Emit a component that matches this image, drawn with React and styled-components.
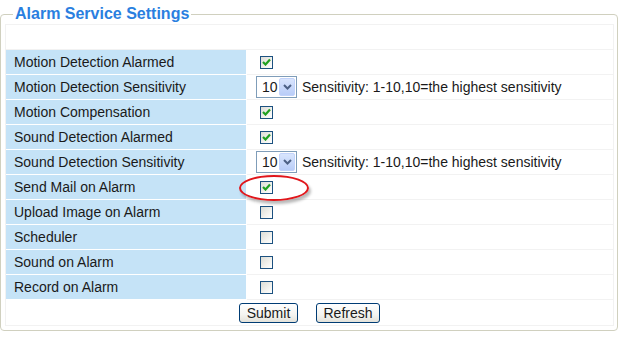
import * as React from 'react';
import styled, { createGlobalStyle } from 'styled-components';

const GlobalStyle = createGlobalStyle`
    html, body {
        margin: 0;
        padding: 0;
        background: #ffffff;
    }
    body {
        font-family: "Liberation Sans", Arial, sans-serif;
        font-size: 14px;
        color: #1a1a1a;
    }
`;

const Frame = styled.fieldset`
    box-sizing: border-box;
    width: 618px;
    margin: 4px 0 0 0;
    padding: 0 3px 4px 4px;
    border: 1px solid #d0d0bf;
    border-radius: 4px;
`;

const Title = styled.legend`
    margin-left: 8px;
    padding: 0 2px;
    font-weight: bold;
    font-size: 16px;
    line-height: 20px;
    color: #2a7fe0;
`;

const Panel = styled.div`
    display: grid;
    grid-template-columns: 240px 1fr;
    row-gap: 1px;
    column-gap: 1px;
    border: 1px solid #f2f2f2;
    background: #ffffff;
`;

const SpacerRow = styled.div`
    grid-column: 1 / -1;
    height: 24px;
    box-shadow: 0 1px 0 #f2f2f2;
`;

const Label = styled.div`
    display: flex;
    align-items: center;
    height: 24px;
    padding-left: 8px;
    background: #c5e3f7;
    white-space: nowrap;
`;

const Value = styled.div`
    position: relative;
    display: flex;
    align-items: center;
    height: 24px;
    padding-left: ${(p) => (p.$select ? 9 : 13)}px;
    box-shadow: 0 1px 0 #f2f2f2;
    white-space: nowrap;
`;

const Box = styled.span`
    box-sizing: border-box;
    display: inline-flex;
    align-items: center;
    justify-content: center;
    width: 13px;
    height: 13px;
    border: 1px solid #1c5180;
    background: linear-gradient(135deg, #dcdcd5 0%, #f6f6f3 70%, #ffffff 100%);
`;

const Select = styled.span`
    box-sizing: border-box;
    display: inline-flex;
    align-items: stretch;
    width: 41px;
    height: 22px;
    border: 1px solid #7f9db9;
    background: #ffffff;
    padding: 1px;
`;

const SelectText = styled.span`
    flex: 1;
    display: flex;
    align-items: center;
    padding-left: 4px;
    font-size: 14px;
`;

const SelectButton = styled.span`
    width: 16px;
    display: flex;
    align-items: center;
    justify-content: center;
    border-radius: 2px;
    background: linear-gradient(180deg, #d9e5fd 0%, #b9cdf8 100%);
    border: 1px solid #c2d3fb;
    box-sizing: border-box;
`;

const Hint = styled.span`
    margin-left: 5px;
`;

const ButtonRow = styled.div`
    grid-column: 1 / -1;
    display: flex;
    justify-content: center;
    align-items: center;
    gap: 18px;
    height: 25px;
`;

const Button = styled.button`
    box-sizing: border-box;
    height: 20px;
    width: ${(p) => p.$w}px;
    margin-top: 1px;
    padding: 0;
    font-family: "Liberation Sans", Arial, sans-serif;
    font-size: 14px;
    color: #1a1a1a;
    border: 1px solid #003c74;
    border-radius: 3px;
    background: linear-gradient(180deg, #ffffff 0%, #f4f4f0 60%, #e3e2da 100%);
`;

const Mark = styled.span`
    position: absolute;
    left: -8px;
    top: 0;
    width: 70px;
    height: 26px;
    box-sizing: border-box;
    border: 2px solid #e0161b;
    border-radius: 50%;
    box-shadow: 2px 3px 3px rgba(0, 0, 0, 0.28);
    pointer-events: none;
`;

function Check({ on }) {
    return (
        <Box>
            {on && (
                <svg width="9" height="8" viewBox="0 0 9 8">
                    <path d="M1 4 L3.5 6.5 L8 1.5" fill="none" stroke="#21a121" strokeWidth="2.2" />
                </svg>
            )}
        </Box>
    );
}

function SensitivitySelect() {
    return (
        <>
            <Select>
                <SelectText>10</SelectText>
                <SelectButton>
                    <svg width="9" height="6" viewBox="0 0 9 6">
                        <path d="M1 1 L4.5 4.5 L8 1" fill="none" stroke="#4d6185" strokeWidth="2" />
                    </svg>
                </SelectButton>
            </Select>
            <Hint>Sensitivity: 1-10,10=the highest sensitivity</Hint>
        </>
    );
}

const rows = [
    { label: 'Motion Detection Alarmed', type: 'check', on: true },
    { label: 'Motion Detection Sensitivity', type: 'select' },
    { label: 'Motion Compensation', type: 'check', on: true },
    { label: 'Sound Detection Alarmed', type: 'check', on: true },
    { label: 'Sound Detection Sensitivity', type: 'select' },
    { label: 'Send Mail on Alarm', type: 'check', on: true, marked: true },
    { label: 'Upload Image on Alarm', type: 'check', on: false },
    { label: 'Scheduler', type: 'check', on: false },
    { label: 'Sound on Alarm', type: 'check', on: false },
    { label: 'Record on Alarm', type: 'check', on: false },
];

export default function App() {
    return (
        <>
            <GlobalStyle />
            <Frame>
                <Title>Alarm Service Settings</Title>
                <Panel>
                    <SpacerRow />
                    {rows.map((row) => (
                        <React.Fragment key={row.label}>
                            <Label>{row.label}</Label>
                            <Value $select={row.type === 'select'}>
                                {row.type === 'select' ? <SensitivitySelect /> : <Check on={row.on} />}
                                {row.marked && <Mark />}
                            </Value>
                        </React.Fragment>
                    ))}
                    <ButtonRow>
                        <Button $w={59}>Submit</Button>
                        <Button $w={64}>Refresh</Button>
                    </ButtonRow>
                </Panel>
            </Frame>
        </>
    );
}
